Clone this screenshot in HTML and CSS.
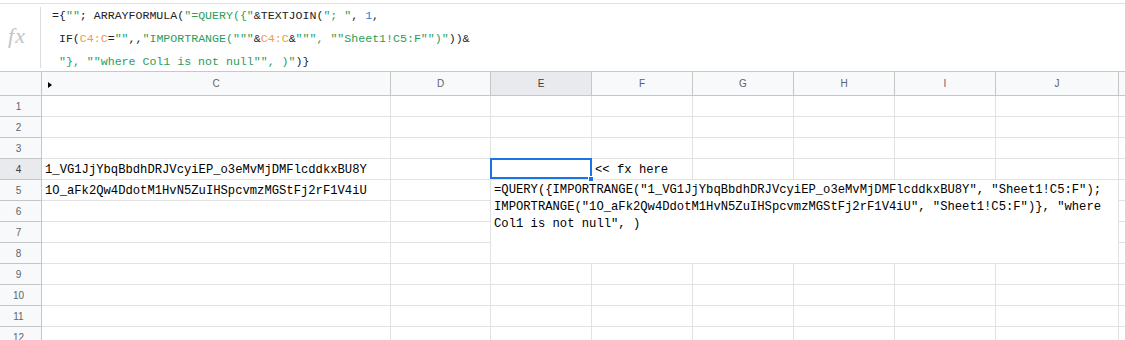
FILE: index.html
```html
<!DOCTYPE html>
<html lang="en">

<head>
    <meta charset="UTF-8">
    <title>Sheet - IMPORTRANGE query</title>
    <link rel="stylesheet" href="styles.css">
</head>

<body>
    <div class="formula-bar">
        <div class="fx">fx</div>
        <div class="formula">
            <div class="fline">={<span class="str">""</span>; ARRAYFORMULA(<span class="str">"=QUERY({"</span>&amp;TEXTJOIN(<span class="str">"; "</span>, <span class="num">1</span>,</div>
            <div class="fline"> IF(<span class="rng">C4:C</span>=<span class="str">""</span>,,<span class="str">"IMPORTRANGE("""</span>&amp;<span class="rng">C4:C</span>&amp;<span class="str">""", ""Sheet1!C5:F"")"</span>))&amp;</div>
            <div class="fline"> <span class="str">"}, ""where Col1 is not null"", )"</span>)}</div>
        </div>
    </div>

    <div class="grid-wrap">
        <table class="grid">
            <colgroup>
                <col class="c-head">
                <col class="c-wide">
                <col class="c-d">
                <col class="c-std">
                <col class="c-std">
                <col class="c-std">
                <col class="c-std">
                <col class="c-std">
                <col class="c-j">
                <col class="c-k">
            </colgroup>
            <thead>
                <tr>
                    <th class="corner"></th>
                    <th class="col-c"><span class="hidden-cols"></span>C</th>
                    <th>D</th>
                    <th class="sel">E</th>
                    <th>F</th>
                    <th>G</th>
                    <th>H</th>
                    <th>I</th>
                    <th>J</th>
                    <th></th>
                </tr>
            </thead>
            <tbody>
                <tr><th class="rn">1</th><td></td><td></td><td></td><td></td><td></td><td></td><td></td><td></td><td></td></tr>
                <tr><th class="rn">2</th><td></td><td></td><td></td><td></td><td></td><td></td><td></td><td></td><td></td></tr>
                <tr><th class="rn">3</th><td></td><td></td><td></td><td></td><td></td><td></td><td></td><td></td><td></td></tr>
                <tr>
                    <th class="rn sel">4</th>
                    <td>1_VG1JjYbqBbdhDRJVcyiEP_o3eMvMjDMFlcddkxBU8Y</td>
                    <td></td>
                    <td class="active"><span class="sel-box"></span><span class="fill-handle"></span></td>
                    <td class="spill">&lt;&lt; fx here</td>
                    <td></td><td></td><td></td><td></td><td></td>
                </tr>
                <tr>
                    <th class="rn">5</th>
                    <td>1O_aFk2Qw4DdotM1HvN5ZuIHSpcvmzMGStFj2rF1V4iU</td>
                    <td></td>
                    <td class="merged" colspan="6" rowspan="4">=QUERY({IMPORTRANGE("1_VG1JjYbqBbdhDRJVcyiEP_o3eMvMjDMFlcddkxBU8Y", "Sheet1!C5:F"); IMPORTRANGE("1O_aFk2Qw4DdotM1HvN5ZuIHSpcvmzMGStFj2rF1V4iU", "Sheet1!C5:F")}, "where Col1 is not null", )</td>
                    <td></td>
                </tr>
                <tr><th class="rn">6</th><td></td><td></td><td></td></tr>
                <tr><th class="rn">7</th><td></td><td></td><td></td></tr>
                <tr><th class="rn">8</th><td></td><td></td><td></td></tr>
                <tr><th class="rn">9</th><td></td><td></td><td></td><td></td><td></td><td></td><td></td><td></td><td></td></tr>
                <tr><th class="rn">10</th><td></td><td></td><td></td><td></td><td></td><td></td><td></td><td></td><td></td></tr>
                <tr><th class="rn">11</th><td></td><td></td><td></td><td></td><td></td><td></td><td></td><td></td><td></td></tr>
                <tr><th class="rn">12</th><td></td><td></td><td></td><td></td><td></td><td></td><td></td><td></td><td></td></tr>
            </tbody>
        </table>
    </div>
</body>

</html>
```

FILE: styles.css
```css
* {
    box-sizing: border-box;
    margin: 0;
    padding: 0;
}

body {
    background: #ffffff;
    color: #000000;
    width: 1125px;
    height: 340px;
    overflow: hidden;
    padding-top: 3px;
    font-family: 'Liberation Sans', Arial, sans-serif;
}

/* Formula bar */
.formula-bar {
    display: flex;
    height: 69px;
    border-top: 1px solid #e0e0e0;
    border-bottom: 1px solid #c8c8c8;
}

.fx {
    width: 41px;
    margin: 3px 0;
    border-right: 1px solid #dadce0;
    color: #c4c4c4;
    font-family: 'Liberation Serif', serif;
    font-style: italic;
    font-size: 22px;
    letter-spacing: 1px;
    display: flex;
    align-items: center;
    justify-content: center;
    padding-right: 6px;
    padding-bottom: 4px;
}

.formula {
    padding-left: 11px;
    font-family: 'Liberation Mono', monospace;
    font-size: 11.6px;
    line-height: 23px;
    color: #202124;
}

.fline {
    white-space: pre;
}

.formula .str {
    color: #2a9d58;
}

.formula .rng {
    color: #f2994a;
}

.formula .num {
    color: #2b7bd3;
}

/* Grid */
.grid-wrap {
    width: 1125px;
    overflow: hidden;
}

.grid {
    table-layout: fixed;
    border-collapse: separate;
    border-spacing: 0;
    width: 1200px;
}

.c-head { width: 42px; }
.c-wide { width: 349px; }
.c-d { width: 100px; }
.c-std { width: 101px; }
.c-j { width: 123px; }
.c-k { width: 81px; }

.grid th {
    background: #f8f9fa;
    color: #5f6368;
    font-weight: normal;
    font-size: 10px;
    text-align: center;
    border-right: 1px solid #c4c7c5;
    border-bottom: 1px solid #c4c7c5;
}

.grid thead th {
    height: 24px;
    position: relative;
}

.grid th.sel {
    background: #e8eaed;
    color: #3c4043;
}

.grid th.rn {
    padding-right: 4px;
    padding-top: 1px;
}

.hidden-cols {
    position: absolute;
    left: 6px;
    top: 10px;
    border-left: 4px solid #000000;
    border-top: 3px solid transparent;
    border-bottom: 3px solid transparent;
}

.grid td {
    height: 21px;
    padding: 0 3px;
    border-right: 1px solid #e2e2e2;
    border-bottom: 1px solid #e2e2e2;
    font-family: 'Liberation Mono', monospace;
    font-size: 12.2px;
    line-height: 18px;
    white-space: nowrap;
    overflow: visible;
    vertical-align: bottom;
}

.grid td.active {
    position: relative;
}

.sel-box {
    position: absolute;
    top: -1px;
    left: -1px;
    right: -1px;
    bottom: 0;
    border: 2px solid #1a73e8;
    z-index: 2;
}

.fill-handle {
    position: absolute;
    right: -3px;
    bottom: -3px;
    width: 6px;
    height: 6px;
    background: #1a73e8;
    border: 1px solid #ffffff;
    z-index: 3;
}

.grid td.merged {
    white-space: normal;
    vertical-align: top;
    line-height: 17px;
    padding-top: 2px;
}
```
